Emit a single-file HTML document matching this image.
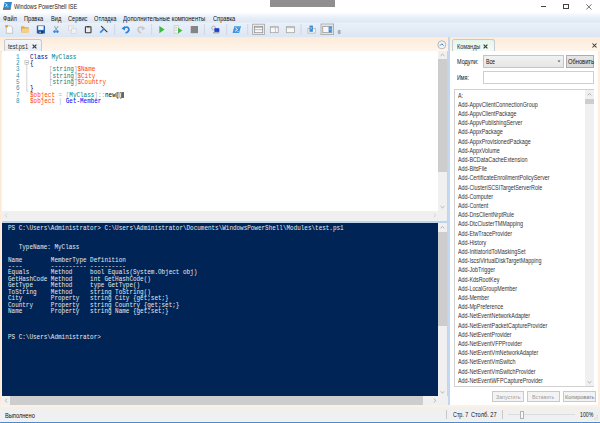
<!DOCTYPE html>
<html><head><meta charset="utf-8">
<style>
*{margin:0;padding:0;box-sizing:border-box}
html,body{width:600px;height:423px;overflow:hidden;background:#fdf0e4;font-family:"Liberation Sans",sans-serif}
.a{position:absolute}
.t{position:absolute;white-space:pre;font-family:"Liberation Sans",sans-serif;font-size:6px;line-height:8px;color:#111;transform-origin:0 0}
.mono{font-family:"Liberation Mono",monospace;font-size:5.95px;white-space:pre}
#title{left:0;top:0;width:600px;height:13px;background:#fff}
#menu{left:0;top:13px;width:600px;height:11px;background:linear-gradient(#fafcfe 0,#e6eef8 45%,#dfe8f4 80%,#eef3fa 100%)}
#tool{left:0;top:24px;width:600px;height:13px;background:linear-gradient(#e8eff8,#dce6f3)}
#tabs{left:0;top:37px;width:600px;height:14px;background:linear-gradient(#fdebd9,#fef5ec)}
#editor{left:1.5px;top:51px;width:437px;height:160px;background:#fff}
#console{left:1.5px;top:223px;width:436.7px;height:173px;background:#012456}
#status{left:0;top:406.5px;width:600px;height:14.5px;background:#f0f0f0}
#taskbar{left:0;top:421.6px;width:600px;height:1.4px;background:#4a8bd0}
.code{position:absolute;left:0;top:0;line-height:6.33px}
.ln{color:#2b91af}
.kw{color:#00008b}
.ty{color:#008080}
.va{color:#ff4500}
.op{color:#a9a9a9}
.cm{color:#0000ff}
.me{color:#000}
.con{position:absolute;left:7.5px;top:224px;color:#f5f5f5;line-height:6.42px}
.li{position:absolute;left:458px;white-space:pre;font-size:6.6px;line-height:9.2px;color:#333;transform:scaleX(0.817);transform-origin:0 0}
.btn{position:absolute;border:1px solid #c9c9c9;background:#f3f3f3}
.cl{position:absolute;font-family:"Liberation Mono",monospace;font-size:6.8px;line-height:8px;white-space:pre;transform:scaleX(0.8750);transform-origin:0 50%}
.kl{position:absolute;font-family:"Liberation Mono",monospace;font-size:7.0px;line-height:8px;white-space:pre;color:#eaeaea;transform:scaleX(0.8500);transform-origin:0 50%}
</style></head><body>
<div class="a" id="title"></div>
<div class="a" style="left:270px;top:0;width:65px;height:6.5px;background:#8f8f8f"></div>
<svg class="a" style="left:2px;top:1px" width="12" height="10" viewBox="2 1 12 10"><path d="M4.6 2H12L10.4 9.7H3Z" fill="#2a8ad0"/><path d="M3.35 8H10.75L10.4 9.7H3Z" fill="#5f7b93"/><path d="M5.3 3.4L7.3 4.9L5 6.6" stroke="#fff" stroke-width="0.8" fill="none"/><path d="M6.8 6.8H8.6" stroke="#e8f2fa" stroke-width="0.6"/></svg>
<div class="t" style="left:14.2px;top:2.6px;font-size:7px;transform:scaleX(0.8);color:#222">Windows PowerShell ISE</div>
<div class="a" style="left:541px;top:6px;width:5.3px;height:0.8px;background:#444"></div>
<div class="a" style="left:563.2px;top:4.1px;width:5.6px;height:4.6px;border:0.8px solid #444"></div>
<svg class="a" style="left:586px;top:4px" width="6" height="6" viewBox="0 0 6 6"><path d="M0.3 0.3L5.5 5.5M5.5 0.3L0.3 5.5" stroke="#444" stroke-width="0.75"/></svg>

<div class="a" id="menu"></div><div class="a" id="tool"></div>
<div class="t" style="left:3px;top:15.3px;font-size:6.6px;transform:scaleX(0.859)">Файл</div>
<div class="t" style="left:24px;top:15.3px;font-size:6.6px;transform:scaleX(0.859)">Правка</div>
<div class="t" style="left:51px;top:15.3px;font-size:6.6px;transform:scaleX(0.859)">Вид</div>
<div class="t" style="left:68px;top:15.3px;font-size:6.6px;transform:scaleX(0.859)">Сервис</div>
<div class="t" style="left:94px;top:15.3px;font-size:6.6px;transform:scaleX(0.859)">Отладка</div>
<div class="t" style="left:123px;top:15.3px;font-size:6.6px;transform:scaleX(0.902)">Дополнительные компоненты</div>
<div class="t" style="left:212.5px;top:15.3px;font-size:6.6px;transform:scaleX(0.859)">Справка</div>

<!-- toolbar -->
<svg class="a" style="left:0;top:22px" width="345" height="15" viewBox="0 22 345 15">
 <!-- new -->
 <path d="M6.3 25.8H10.6L12.6 27.8V33.3H6.3Z" fill="#fbfbfb" stroke="#a8a8a8" stroke-width="0.6"/>
 <circle cx="6.6" cy="26.3" r="1.4" fill="#f39a2b"/>
 <!-- open -->
 <path d="M21 26.3H24L25 27.2H28.6V32.6H21Z" fill="#e3aa4c"/>
 <path d="M21 32.6L22.3 28.6H29.5L28.4 32.6Z" fill="#f6cf86"/>
 <!-- save -->
 <rect x="36.8" y="25.5" width="8.2" height="8" rx="0.6" fill="#2a63ad"/>
 <rect x="38.2" y="26.1" width="5.4" height="3.8" fill="#f4f6f8"/>
 <rect x="38.6" y="31" width="4.6" height="2.5" fill="#1b3a66"/>
 <rect x="39.5" y="31.5" width="1.2" height="1.5" fill="#dfe6ef"/>
 <!-- cut -->
 <path d="M54.4 26L56.6 30.2M58.2 26L55.6 30.2" stroke="#7f8a96" stroke-width="0.8"/>
 <circle cx="54.6" cy="31.6" r="1.3" fill="#2f86d6"/>
 <circle cx="57.4" cy="31.6" r="1.3" fill="#2f86d6"/>
 <!-- copy -->
 <rect x="68.6" y="26" width="4.6" height="4.5" fill="#f2f2f2" stroke="#cfcfcf" stroke-width="0.6"/>
 <rect x="71.6" y="28.8" width="4.6" height="4.5" fill="#f2f2f2" stroke="#cfcfcf" stroke-width="0.6"/>
 <!-- paste -->
 <rect x="85.4" y="26.8" width="5.6" height="5.9" rx="0.5" fill="#ececec" stroke="#3c3c3c" stroke-width="1.1"/>
 <rect x="86.9" y="26.2" width="2.6" height="1.2" fill="#3c3c3c"/>
 <!-- clear -->
 <path d="M101.2 26.2L107.3 32.2" stroke="#2d3748" stroke-width="1.1"/>
 <path d="M100.2 32.6L104.1 28.6" stroke="#2d8ee0" stroke-width="1.7"/>
 <!-- separators -->
 <g stroke="#c9d2dc" stroke-width="0.8">
  <path d="M114.7 24V35M151.6 24V35M204.4 24V35M226.7 24V35M247.7 24V35M301 24V35"/>
 </g>
 <!-- undo -->
 <path d="M123.6 28.3C125.6 26.4 128.8 26.6 128.9 29.2C129 31 127.6 32.2 125.6 33" stroke="#2a86d6" stroke-width="1.7" fill="none"/>
 <path d="M121.5 28.4L124.8 25.9L125 30.4Z" fill="#2a86d6"/>
 <!-- redo -->
 <path d="M143.3 28.3C141.3 26.4 138.1 26.6 138 29.2C137.9 31 139.3 32.2 141.3 33" stroke="#c8c8c8" stroke-width="1.7" fill="none"/>
 <path d="M145.4 28.4L142.1 25.9L141.9 30.4Z" fill="#c8c8c8"/>
 <!-- run -->
 <path d="M159.3 26L164.6 29.6L159.3 33.3Z" fill="#3dbb3d"/>
 <!-- run selection -->
 <path d="M174.2 25.6H178.6V33.2H174.2Z" fill="#f6f6f6" stroke="#b9b9b9" stroke-width="0.6"/>
 <path d="M175.2 27.5H177.4M175.2 29H177M175.2 30.5H177" stroke="#9a9a9a" stroke-width="0.4"/>
 <path d="M178 27.8L182.4 30.6L178 33.4Z" fill="#3dbb3d"/>
 <!-- stop -->
 <rect x="190.7" y="26" width="7.3" height="7.2" fill="#858585"/>
 <!-- remote -->
 <circle cx="213.6" cy="28" r="2" fill="#e6e6e6" stroke="#8c8c8c" stroke-width="0.5"/>
 <rect x="214.4" y="28.2" width="4.9" height="3.7" fill="#1f3fc8"/>
 <path d="M213 32.8H219.4" stroke="#7d7d7d" stroke-width="0.8"/>
 <!-- ps -->
 <path d="M234.4 26.1H241L239.2 33H232.6Z" fill="#4293dc"/>
 <path d="M234.4 26.1H241L240.6 27.6H234Z" fill="#6cb0ea"/>
 <path d="M235.4 27.8L237.6 29.5L235.1 31.3" stroke="#fff" stroke-width="0.9" fill="none"/>
 <path d="M237.2 31.6H238.9" stroke="#e8f2fb" stroke-width="0.6"/>
 <!-- pressed button 1 -->
 <rect x="252.6" y="24.2" width="11.8" height="10.3" fill="#e6ebf1" stroke="#a3a3a3" stroke-width="0.8"/>
 <rect x="254.5" y="26.5" width="8.2" height="6.2" fill="#f8f8f8" stroke="#8a8a8a" stroke-width="0.7"/>
 <path d="M254.5 27.5H262.7M254.5 29.7H262.7" stroke="#8a8a8a" stroke-width="0.55"/>
 <!-- layout right -->
 <rect x="270.3" y="26.7" width="7.9" height="6" fill="#f8f8f8" stroke="#9c9c9c" stroke-width="0.7"/>
 <path d="M270.3 27.6H278.2M275.4 27.6V32.7" stroke="#9c9c9c" stroke-width="0.55"/>
 <!-- layout max -->
 <rect x="286.3" y="26.7" width="8.1" height="6" fill="#f8f8f8" stroke="#9c9c9c" stroke-width="0.7"/>
 <path d="M286.3 27.7H294.4" stroke="#9c9c9c" stroke-width="0.7"/>
 <!-- show script pane -->
 <rect x="307.9" y="28.4" width="7.3" height="4.7" fill="#f5f5f5" stroke="#a5a5a5" stroke-width="0.6"/>
 <rect x="309.5" y="25.6" width="3.4" height="6.2" fill="#3a8ad6"/>
 <path d="M310.3 27.3L311.7 28.2L310.3 29.1" stroke="#fff" stroke-width="0.5" fill="none"/>
 <!-- pressed button 2 -->
 <rect x="321" y="24" width="12.6" height="10.6" fill="#e6ebf1" stroke="#a3a3a3" stroke-width="0.8"/>
 <rect x="322.8" y="26.3" width="9" height="6.4" fill="#f8f8f8" stroke="#8a8a8a" stroke-width="0.7"/>
 <rect x="328.6" y="26.6" width="3" height="5.8" fill="#3a8ad6"/>
 <path d="M329.4 28.2L330.6 29.1L329.4 30" stroke="#fff" stroke-width="0.5" fill="none"/>
 <!-- overflow -->
 <path d="M337.8 31H340.6M337.8 33H340.6" stroke="#444" stroke-width="0.7"/>
</svg>

<!-- tab bar -->
<div class="a" id="tabs"></div>
<div class="a" style="left:0;top:50.5px;width:448px;height:1px;background:#d9d3cd"></div>
<div class="a" style="left:3.6px;top:39.3px;width:38.8px;height:12px;border:1px solid #c6cbd2;border-bottom:none;border-radius:2.5px 2.5px 0 0;background:linear-gradient(#f3f6fa,#e6edf5)"></div>
<div class="t" style="left:7.8px;top:42.6px;font-size:7px;transform:scaleX(0.82);color:#2a2a2a">test.ps1</div>
<svg class="a" style="left:32px;top:44px" width="5" height="5" viewBox="0 0 5 5"><path d="M0.6 0.6L4.4 4.4M4.4 0.6L0.6 4.4" stroke="#3a3a3a" stroke-width="1.15"/></svg>
<!-- collapse circle -->
<svg class="a" style="left:437px;top:40px" width="10" height="10" viewBox="0 0 10 10"><circle cx="4.8" cy="4.8" r="4" fill="#f4f4f4" stroke="#9d9d9d" stroke-width="0.7"/><path d="M3 5.6L4.8 3.8L6.6 5.6" stroke="#2f7fd2" stroke-width="1" fill="none"/></svg>

<!-- editor -->
<div class="a" id="editor"></div>
<div class="a" style="left:0;top:51px;width:1.4px;height:355px;background:#fde9d6"></div>
<!-- fold -->
<svg class="a" style="left:24px;top:60px" width="6" height="33" viewBox="24 60 6 33">
 <rect x="24.9" y="60.7" width="3.8" height="3.8" fill="#fff" stroke="#a6a6a6" stroke-width="0.5"/>
 <path d="M25.7 62.6H27.9" stroke="#5a5a5a" stroke-width="0.6"/>
 <path d="M26.8 64.5V91.2H28.6" stroke="#b4b4b4" stroke-width="0.6" fill="none"/>
</svg>
<!-- bracket highlight + caret -->
<div class="a" style="left:116.4px;top:91.6px;width:2.8px;height:6px;border:0.5px solid #c8c8c8;background:#ececec"></div>
<div class="a" style="left:119.3px;top:91.6px;width:2.8px;height:6px;border:0.5px solid #c8c8c8;background:#ececec"></div>
<div class="a" style="left:122.3px;top:91.5px;width:1.4px;height:6.3px;background:#6a6a6a"></div>
<div class="cl" style="left:16px;top:52.80px"><span class="ln">1</span></div>
<div class="cl" style="left:29.6px;top:52.80px"><span class="kw">Class</span> <span class="ty">MyClass</span></div>
<div class="cl" style="left:16px;top:59.13px"><span class="ln">2</span></div>
<div class="cl" style="left:29.6px;top:59.13px"><span class="me">{</span></div>
<div class="cl" style="left:16px;top:65.46px"><span class="ln">3</span></div>
<div class="cl" style="left:29.6px;top:65.46px"><span style="display:inline-block;width:21.60px"></span><span class="op">[</span><span class="ty">string</span><span class="op">]</span><span class="va">$Name</span></div>
<div class="cl" style="left:16px;top:71.79px"><span class="ln">4</span></div>
<div class="cl" style="left:29.6px;top:71.79px"><span style="display:inline-block;width:21.60px"></span><span class="op">[</span><span class="ty">string</span><span class="op">]</span><span class="va">$City</span></div>
<div class="cl" style="left:16px;top:78.12px"><span class="ln">5</span></div>
<div class="cl" style="left:29.6px;top:78.12px"><span style="display:inline-block;width:21.60px"></span><span class="op">[</span><span class="ty">string</span><span class="op">]</span><span class="va">$Country</span></div>
<div class="cl" style="left:16px;top:84.45px"><span class="ln">6</span></div>
<div class="cl" style="left:29.6px;top:84.45px"><span class="me">}</span></div>
<div class="cl" style="left:16px;top:90.78px"><span class="ln">7</span></div>
<div class="cl" style="left:29.6px;top:90.78px"><span class="va">$object</span> <span class="op">=</span> <span class="op">[</span><span class="ty">MyClass</span><span class="op">]</span><span class="op">::</span><span class="me">new</span><span class="me">()</span></div>
<div class="cl" style="left:16px;top:97.11px"><span class="ln">8</span></div>
<div class="cl" style="left:29.6px;top:97.11px"><span class="va">$object</span> <span class="op">|</span> <span class="cm">Get-Member</span></div>
<!-- editor v scrollbar -->
<div class="a" style="left:438.2px;top:51px;width:9px;height:160px;background:#f0f0f0"></div>
<div class="a" style="left:438.2px;top:59px;width:9px;height:113px;background:#cdcdcd"></div>
<svg class="a" style="left:438.2px;top:51px" width="9" height="8" viewBox="0 0 9 8"><path d="M2.6 4.8L4.5 3.2L6.4 4.8" stroke="#8a8a8a" stroke-width="0.6" fill="none"/></svg>
<svg class="a" style="left:438.2px;top:203px" width="9" height="8" viewBox="0 0 9 8"><path d="M2.6 3.2L4.5 4.8L6.4 3.2" stroke="#8a8a8a" stroke-width="0.6" fill="none"/></svg>
<!-- editor h scrollbar -->
<div class="a" style="left:1.5px;top:211px;width:437px;height:9.5px;background:#f0f0f0"></div>
<svg class="a" style="left:1.5px;top:211px" width="9" height="9" viewBox="0 0 9 9"><path d="M5 2.6L3.4 4.5L5 6.4" stroke="#bdbdbd" stroke-width="0.6" fill="none"/></svg>
<svg class="a" style="left:429.5px;top:211px" width="9" height="9" viewBox="0 0 9 9"><path d="M4 2.6L5.6 4.5L4 6.4" stroke="#bdbdbd" stroke-width="0.6" fill="none"/></svg>
<div class="a" style="left:438.2px;top:211px;width:9px;height:9.5px;background:#f0f0f0"></div>
<!-- splitter -->
<div class="a" style="left:1.5px;top:220.5px;width:446px;height:0.8px;background:#d5d5d5"></div>
<div class="a" style="left:1.5px;top:221.3px;width:446px;height:1.7px;background:#bcd4ee"></div>
<div class="a" style="left:447.2px;top:51px;width:0.7px;height:354px;background:#d2d2d2"></div><div class="a" style="left:447.9px;top:37px;width:2.1px;height:368px;background:#c3d8ee"></div>

<!-- console -->
<div class="a" id="console"></div>
<div class="kl" style="left:7.5px;top:223.50px">PS C:\Users\Administrator&gt; C:\Users\Administrator\Documents\WindowsPowerShell\Modules\test.ps1</div>
<div class="kl" style="left:7.5px;top:242.76px">   TypeName: MyClass</div>
<div class="kl" style="left:7.5px;top:255.60px">Name        MemberType Definition</div>
<div class="kl" style="left:7.5px;top:262.02px">----        ---------- ----------</div>
<div class="kl" style="left:7.5px;top:268.44px">Equals      Method     bool Equals(System.Object obj)</div>
<div class="kl" style="left:7.5px;top:274.86px">GetHashCode Method     int GetHashCode()</div>
<div class="kl" style="left:7.5px;top:281.28px">GetType     Method     type GetType()</div>
<div class="kl" style="left:7.5px;top:287.70px">ToString    Method     string ToString()</div>
<div class="kl" style="left:7.5px;top:294.12px">City        Property   string City {get;set;}</div>
<div class="kl" style="left:7.5px;top:300.54px">Country     Property   string Country {get;set;}</div>
<div class="kl" style="left:7.5px;top:306.96px">Name        Property   string Name {get;set;}</div>
<div class="kl" style="left:7.5px;top:332.64px">PS C:\Users\Administrator&gt;</div>
<!-- console v scrollbar -->
<div class="a" style="left:438.2px;top:223px;width:9px;height:173px;background:#f0f0f0"></div>
<div class="a" style="left:438.2px;top:232px;width:9px;height:94px;background:#cdcdcd"></div>
<svg class="a" style="left:438.2px;top:223px" width="9" height="9" viewBox="0 0 9 9"><path d="M2.6 5.2L4.5 3.6L6.4 5.2" stroke="#8a8a8a" stroke-width="0.6" fill="none"/></svg>
<svg class="a" style="left:438.2px;top:388px" width="9" height="8" viewBox="0 0 9 8"><path d="M2.6 3.4L4.5 5L6.4 3.4" stroke="#8a8a8a" stroke-width="0.6" fill="none"/></svg>
<!-- console h scrollbar -->
<div class="a" style="left:1.5px;top:396px;width:446px;height:8.7px;background:#f0f0f0"></div>
<div class="a" style="left:10.2px;top:396px;width:413px;height:8.7px;background:#cdcdcd"></div>
<svg class="a" style="left:1.5px;top:396px" width="9" height="9" viewBox="0 0 9 9"><path d="M5 2.6L3.4 4.5L5 6.4" stroke="#8a8a8a" stroke-width="0.6" fill="none"/></svg>
<svg class="a" style="left:429.5px;top:396px" width="9" height="9" viewBox="0 0 9 9"><path d="M4 2.6L5.6 4.5L4 6.4" stroke="#8a8a8a" stroke-width="0.6" fill="none"/></svg>

<!-- commands pane -->
<div class="a" style="left:450px;top:51px;width:148px;height:354px;background:#fff"></div>
<div class="a" style="left:452.3px;top:39.3px;width:42.4px;height:12px;border:1px solid #c6cbd2;border-bottom:none;border-radius:2.5px 2.5px 0 0;background:linear-gradient(#e6f5ea,#f4fbf6)"></div>
<div class="t" style="left:456.6px;top:42.6px;font-size:7px;transform:scaleX(0.785);color:#2a2a2a">Команды</div>
<svg class="a" style="left:483.3px;top:43.5px" width="5" height="5" viewBox="0 0 5 5"><path d="M0.6 0.6L4.4 4.4M4.4 0.6L0.6 4.4" stroke="#3a3a3a" stroke-width="1.15"/></svg>
<svg class="a" style="left:592px;top:43px" width="5" height="5" viewBox="0 0 5 5"><path d="M0.5 0.5L4.5 4.5M4.5 0.5L0.5 4.5" stroke="#333" stroke-width="1.05"/></svg>
<div class="t" style="left:456.7px;top:57.6px;font-size:6.6px;transform:scaleX(0.838)">Модули:</div>
<div class="a" style="left:483px;top:55px;width:80.6px;height:12.6px;border:1px solid #c4c4c4;background:linear-gradient(#f2f2f2,#e6e6e6)"></div>
<div class="t" style="left:486px;top:58.3px;font-size:6.6px;transform:scaleX(0.795)">Все</div>
<svg class="a" style="left:557px;top:60px" width="4" height="3" viewBox="0 0 4 3"><path d="M0.5 0.5H3.5L2 2.2Z" fill="#555"/></svg>
<div class="a" style="left:566px;top:55px;width:28px;height:12.6px;border:1px solid #adadad;background:linear-gradient(#e6e6e6,#dadada)"></div>
<div class="t" style="left:567.6px;top:58.3px;font-size:6.6px;transform:scaleX(0.870)">Обновить</div>
<div class="t" style="left:457px;top:74.3px;font-size:6.6px;transform:scaleX(0.817)">Имя:</div>
<div class="a" style="left:483px;top:71px;width:111px;height:12.5px;border:1px solid #cfcfcf;background:#fff"></div>
<!-- list -->
<div class="a" style="left:454.3px;top:89.2px;width:139.7px;height:297.5px;border:1px solid #d0d0d0;background:#fff"></div>
<div class="a" style="left:585px;top:90px;width:8.5px;height:296px;background:#f0f0f0"></div>
<div class="a" style="left:585px;top:99px;width:8.5px;height:4.8px;background:#cdcdcd"></div>
<svg class="a" style="left:585px;top:90px" width="9" height="9" viewBox="0 0 9 9"><path d="M2.6 5.2L4.5 3.6L6.4 5.2" stroke="#8a8a8a" stroke-width="0.6" fill="none"/></svg>
<svg class="a" style="left:585px;top:378px" width="9" height="8" viewBox="0 0 9 8"><path d="M2.6 3.4L4.5 5L6.4 3.4" stroke="#8a8a8a" stroke-width="0.6" fill="none"/></svg>
<div class="li" style="top:90.5px">A:
Add-AppvClientConnectionGroup
Add-AppvClientPackage
Add-AppvPublishingServer
Add-AppxPackage
Add-AppxProvisionedPackage
Add-AppxVolume
Add-BCDataCacheExtension
Add-BitsFile
Add-CertificateEnrollmentPolicyServer
Add-ClusteriSCSITargetServerRole
Add-Computer
Add-Content
Add-DnsClientNrptRule
Add-DtcClusterTMMapping
Add-EtwTraceProvider
Add-History
Add-InitiatorIdToMaskingSet
Add-IscsiVirtualDiskTargetMapping
Add-JobTrigger
Add-KdsRootKey
Add-LocalGroupMember
Add-Member
Add-MpPreference
Add-NetEventNetworkAdapter
Add-NetEventPacketCaptureProvider
Add-NetEventProvider
Add-NetEventVFPProvider
Add-NetEventVmNetworkAdapter
Add-NetEventVmSwitch
Add-NetEventVmSwitchProvider
Add-NetEventWFPCaptureProvider</div>
<!-- buttons -->
<div class="btn" style="left:492.4px;top:391.3px;width:32px;height:10.7px"></div>
<div class="t" style="left:496px;top:393px;transform:scaleX(0.875);color:#a0a0a0">Запустить</div>
<div class="btn" style="left:527.3px;top:391.3px;width:32.4px;height:10.7px"></div>
<div class="t" style="left:532px;top:393px;transform:scaleX(0.875);color:#a0a0a0">Вставить</div>
<div class="btn" style="left:563px;top:391.3px;width:32.7px;height:10.7px"></div>
<div class="t" style="left:564.5px;top:393px;transform:scaleX(0.910);color:#7a7a7a">Копировать</div>
<div class="a" style="left:598.2px;top:51px;width:1.8px;height:355px;background:#fdeedf"></div>

<!-- status -->
<div class="a" id="status"></div>
<div class="t" style="left:5px;top:412px;font-size:6.6px;transform:scaleX(0.859)">Выполнено</div>
<div class="a" style="left:446.2px;top:410.3px;width:0.8px;height:9px;background:#c8c8c8"></div>
<div class="t" style="left:452.7px;top:411px;font-size:6.6px;transform:scaleX(0.817)">Стр. 7</div>
<div class="t" style="left:471px;top:411px;font-size:6.6px;transform:scaleX(0.859)">Столб. 27</div>
<div class="a" style="left:502px;top:410.3px;width:0.8px;height:9px;background:#c8c8c8"></div>
<div class="a" style="left:507.7px;top:414.3px;width:67px;height:0.8px;background:#dcdcdc"></div>
<div class="a" style="left:520.2px;top:411px;width:3.6px;height:7.7px;border:0.6px solid #b4b4b4;background:#f7f7f7"></div>
<div class="t" style="left:579.7px;top:411px;font-size:6.6px;transform:scaleX(0.785)">100%</div>
<svg class="a" style="left:592px;top:413px" width="8" height="9" viewBox="592 413 8 9"><g fill="#c4c4c4"><rect x="597" y="415" width="0.8" height="0.8"/><rect x="595.5" y="416.8" width="0.8" height="0.8"/><rect x="597" y="416.8" width="0.8" height="0.8"/><rect x="594" y="418.6" width="0.8" height="0.8"/><rect x="595.5" y="418.6" width="0.8" height="0.8"/><rect x="597" y="418.6" width="0.8" height="0.8"/></g></svg>
<div class="a" id="taskbar"></div>
</body></html>
